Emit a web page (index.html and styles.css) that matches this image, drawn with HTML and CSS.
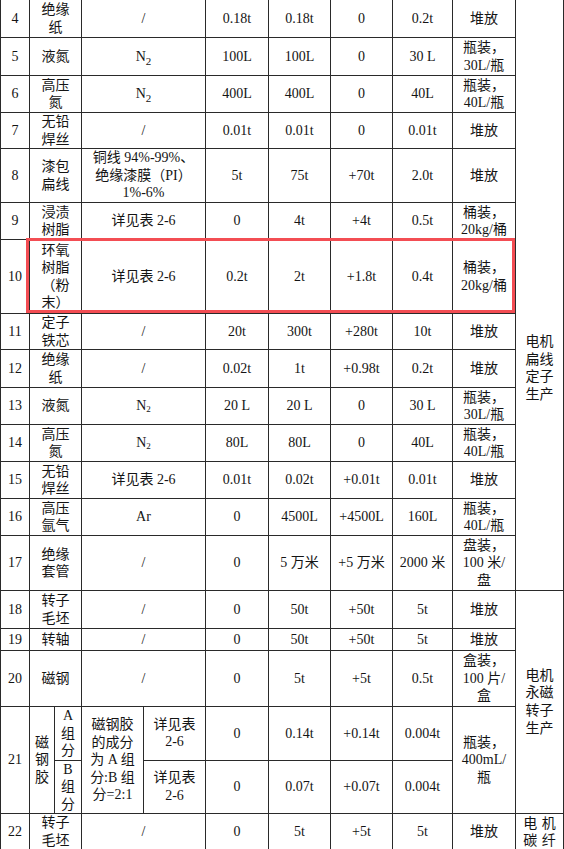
FILE: index.html
```html
<!DOCTYPE html>
<html lang="zh-CN">
<head>
<meta charset="utf-8">
<title>原辅材料表</title>
<link rel="stylesheet" href="styles.css">
</head>
<body>
<div class="sheet">
<table class="t">
<colgroup>
<col class="c1"><col class="c2"><col class="c3"><col class="c4"><col class="c5"><col class="c6"><col class="c7"><col class="c8"><col class="c9"><col class="c10"><col class="c11">
</colgroup>
<tbody>
<tr class="r38"><td>4</td><td colspan="2">绝缘<br>纸</td><td colspan="2">/</td><td>0.18t</td><td>0.18t</td><td>0</td><td>0.2t</td><td>堆放</td><td rowspan="14" class="grp top">电机<br>扁线<br>定子<br>生产</td></tr>
<tr class="r38"><td>5</td><td colspan="2">液氮</td><td colspan="2">N<sub class="s1">2</sub></td><td>100L</td><td>100L</td><td>0</td><td>30 L</td><td>瓶装，<br>30L/瓶</td></tr>
<tr class="r37"><td>6</td><td colspan="2">高压<br>氮</td><td colspan="2">N<sub class="s1">2</sub></td><td>400L</td><td>400L</td><td>0</td><td>40L</td><td>瓶装，<br>40L/瓶</td></tr>
<tr class="r35"><td>7</td><td colspan="2">无铅<br>焊丝</td><td colspan="2">/</td><td>0.01t</td><td>0.01t</td><td>0</td><td>0.01t</td><td>堆放</td></tr>
<tr class="r54"><td>8</td><td colspan="2">漆包<br>扁线</td><td colspan="2">铜线 94%-99%、<br>绝缘漆膜（PI）<br>1%-6%</td><td>5t</td><td>75t</td><td>+70t</td><td>2.0t</td><td>堆放</td></tr>
<tr class="r37"><td>9</td><td colspan="2">浸渍<br>树脂</td><td colspan="2">详见表 2-6</td><td>0</td><td>4t</td><td>+4t</td><td>0.5t</td><td>桶装，<br>20kg/桶</td></tr>
<tr class="r74"><td>10</td><td colspan="2">环氧<br>树脂<br>（粉<br>末）</td><td colspan="2">详见表 2-6</td><td>0.2t</td><td>2t</td><td>+1.8t</td><td>0.4t</td><td>桶装，<br>20kg/桶</td></tr>
<tr class="r35"><td>11</td><td colspan="2">定子<br>铁芯</td><td colspan="2">/</td><td>20t</td><td>300t</td><td>+280t</td><td>10t</td><td>堆放</td></tr>
<tr class="r38"><td>12</td><td colspan="2">绝缘<br>纸</td><td colspan="2">/</td><td>0.02t</td><td>1t</td><td>+0.98t</td><td>0.2t</td><td>堆放</td></tr>
<tr class="r37"><td>13</td><td colspan="2">液氮</td><td colspan="2">N<sub class="s2">2</sub></td><td>20 L</td><td>20 L</td><td>0</td><td>30 L</td><td>瓶装，<br>30L/瓶</td></tr>
<tr class="r37"><td>14</td><td colspan="2">高压<br>氮</td><td colspan="2">N<sub class="s2">2</sub></td><td>80L</td><td>80L</td><td>0</td><td>40L</td><td>瓶装，<br>40L/瓶</td></tr>
<tr class="r37"><td>15</td><td colspan="2">无铅<br>焊丝</td><td colspan="2">详见表 2-6</td><td>0.01t</td><td>0.02t</td><td>+0.01t</td><td>0.01t</td><td>堆放</td></tr>
<tr class="r37"><td>16</td><td colspan="2">高压<br>氩气</td><td colspan="2">Ar</td><td>0</td><td>4500L</td><td>+4500L</td><td>160L</td><td>瓶装，<br>40L/瓶</td></tr>
<tr class="r55"><td>17</td><td colspan="2">绝缘<br>套管</td><td colspan="2">/</td><td>0</td><td>5 万米</td><td>+5 万米</td><td>2000 米</td><td>盘装，<br>100 米/<br>盘</td></tr>
<tr class="r38"><td>18</td><td colspan="2">转子<br>毛坯</td><td colspan="2">/</td><td>0</td><td>50t</td><td>+50t</td><td>5t</td><td>堆放</td><td rowspan="5" class="grp">电机<br>永磁<br>转子<br>生产</td></tr>
<tr class="r22"><td>19</td><td colspan="2">转轴</td><td colspan="2">/</td><td>0</td><td>50t</td><td>+50t</td><td>5t</td><td>堆放</td></tr>
<tr class="r56"><td>20</td><td colspan="2">磁钢</td><td colspan="2">/</td><td>0</td><td>5t</td><td>+5t</td><td>0.5t</td><td>盒装，<br>100 片/<br>盒</td></tr>
<tr class="r53"><td rowspan="2">21</td><td rowspan="2">磁<br>钢<br>胶</td><td>A<br>组<br>分</td><td rowspan="2">磁钢胶<br>的成分<br>为 A 组<br>分:B 组<br>分=2:1</td><td>详见表<br>2-6</td><td>0</td><td>0.14t</td><td>+0.14t</td><td>0.004t</td><td rowspan="2">瓶装，<br>400mL/<br>瓶</td></tr>
<tr class="r53"><td>B<br>组<br>分</td><td>详见表<br>2-6</td><td>0</td><td>0.07t</td><td>+0.07t</td><td>0.004t</td></tr>
<tr class="r37 last"><td>22</td><td colspan="2">转子<br>毛坯</td><td colspan="2">/</td><td>0</td><td>5t</td><td>+5t</td><td>5t</td><td>堆放</td><td class="grp spread">电&#8196;机<br>碳&#8196;纤</td></tr>
</tbody>
</table>
<div class="hl"></div>
</div>
</body>
</html>
```

FILE: styles.css
```css
html, body {
  margin: 0;
  padding: 0;
  background: #ffffff;
}

.sheet {
  position: relative;
  width: 564px;
  height: 849px;
  overflow: hidden;
}

.t {
  margin-top: -1px;
  border-collapse: collapse;
  table-layout: fixed;
  width: 563px;
  font-family: "Liberation Serif", "Noto Sans CJK SC", serif;
  font-size: 14px;
  line-height: 17.5px;
  color: #141414;
}

.c1 { width: 29px; }
.c2 { width: 25px; }
.c3 { width: 27px; }
.c4 { width: 62px; }
.c5 { width: 62px; }
.c6 { width: 63px; }
.c7 { width: 62px; }
.c8 { width: 62px; }
.c9 { width: 60px; }
.c10 { width: 63px; }
.c11 { width: 48px; }

.t td {
  border: 1px solid #2a2a2a;
  padding: 0;
  text-align: center;
  vertical-align: middle;
  white-space: nowrap;
  overflow: visible;
}

.r22 { height: 22px; }
.r35 { height: 35px; }
.r37 { height: 37px; }
.r38 { height: 38px; }
.r53 { height: 53px; }
.r54 { height: 54px; }
.r55 { height: 55px; }
.r56 { height: 56px; }
.r74 { height: 74px; }

.last td {
  border-bottom: 2px solid #222222;
}

.grp {
  line-height: 17.7px;
}

.grp.top {
  vertical-align: top;
  padding-top: 333px;
}

.spread {
  line-height: 17px;
}

.s1 {
  font-size: 11px;
  vertical-align: -4px;
  line-height: 0;
}

.s2 {
  font-size: 9px;
  vertical-align: -2px;
  line-height: 0;
}

.hl {
  position: absolute;
  left: 26px;
  top: 238px;
  width: 489px;
  height: 75px;
  box-sizing: border-box;
  border: 3px solid #f34d53;
}
```
